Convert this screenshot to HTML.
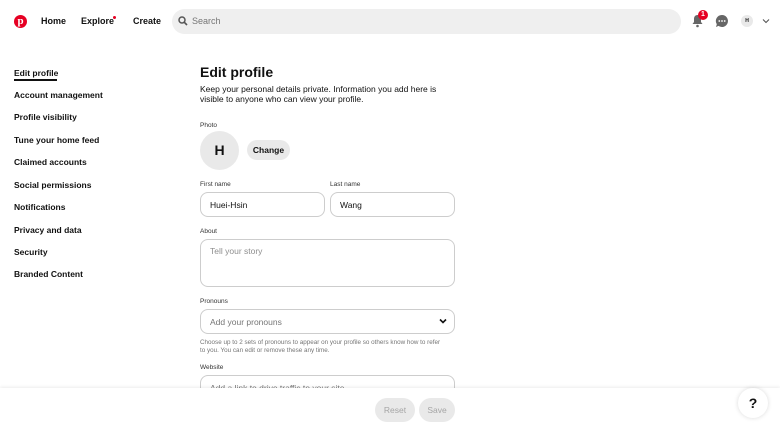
<!DOCTYPE html>
<html><head><meta charset="utf-8"><style>
*{box-sizing:border-box;margin:0;padding:0}
body{width:780px;height:428px;overflow:hidden;background:#fff;font-family:"Liberation Sans",Arial,sans-serif;color:#111;position:relative}
.a{position:absolute;white-space:nowrap}
.nav{font-size:8.5px;font-weight:bold;left:14px}
.top{font-size:9px;font-weight:bold;top:16px}
.lbl{font-size:6.5px;color:#333;left:200px}
.inp{position:absolute;border:1.5px solid #cdcdcd;border-radius:8px;font-size:8.5px;padding-left:9px;display:flex;align-items:center}
.btn{position:absolute;background:#e9e9e9;border-radius:12px;font-size:8.5px;font-weight:bold;display:flex;align-items:center;justify-content:center}
</style></head><body>
<div class="a" style="left:14px;top:15px;width:13px;height:13px;border-radius:50%;background:#e60023;color:#fff;font-size:11px;font-weight:bold;text-align:center;line-height:13px;font-family:'Liberation Serif',serif">p</div>
<div class="a top" style="left:41px">Home</div>
<div class="a top" style="left:81px">Explore</div>
<div class="a" style="left:113px;top:16px;width:3px;height:3px;border-radius:50%;background:#e60023"></div>
<div class="a top" style="left:133px">Create</div>
<div class="a" style="left:172px;top:9px;width:509px;height:25px;border-radius:13px;background:#efefef"></div>
<svg class="a" style="left:178px;top:16px" width="10" height="10" viewBox="0 0 10 10"><circle cx="4" cy="4" r="3" fill="none" stroke="#555" stroke-width="1.5"/><path d="M6.2 6.2L9 9" stroke="#555" stroke-width="1.6"/></svg>
<div class="a" style="left:192px;top:16px;font-size:9px;color:#767676">Search</div>
<svg class="a" style="left:691px;top:14px" width="13" height="14" viewBox="0 0 13 14"><path d="M6.5 1C4 1 3 3 3 5v3L1.5 10h10L10 8V5C10 3 9 1 6.5 1z" fill="#666"/><circle cx="6.5" cy="12" r="1.3" fill="#666"/></svg>
<div class="a" style="left:698px;top:10px;width:10px;height:10px;border-radius:50%;background:#e60023;color:#fff;font-size:7px;font-weight:bold;text-align:center;line-height:10px">1</div>
<svg class="a" style="left:715px;top:14px" width="14" height="14" viewBox="0 0 14 14"><path d="M7 1a6 6 0 1 1-3.5 10.9L1 13l.8-2.8A6 6 0 0 1 7 1z" fill="#666"/><circle cx="4.3" cy="7" r=".9" fill="#fff"/><circle cx="7" cy="7" r=".9" fill="#fff"/><circle cx="9.7" cy="7" r=".9" fill="#fff"/></svg>
<div class="a" style="left:741px;top:15px;width:12px;height:12px;border-radius:50%;background:#e9e9e9;font-size:5px;font-weight:bold;text-align:center;line-height:12px">H</div>
<svg class="a" style="left:762px;top:18px" width="8" height="6" viewBox="0 0 8 6"><path d="M1 1.5L4 4.5 7 1.5" fill="none" stroke="#555" stroke-width="1.1"/></svg>

<div class="a nav" style="top:68px">Edit profile</div>
<div class="a" style="left:14px;top:79px;width:43px;height:2px;background:#111"></div>
<div class="a nav" style="top:90px">Account management</div>
<div class="a nav" style="top:112px">Profile visibility</div>
<div class="a nav" style="top:135px">Tune your home feed</div>
<div class="a nav" style="top:157px">Claimed accounts</div>
<div class="a nav" style="top:180px">Social permissions</div>
<div class="a nav" style="top:202px">Notifications</div>
<div class="a nav" style="top:225px">Privacy and data</div>
<div class="a nav" style="top:247px">Security</div>
<div class="a nav" style="top:269px">Branded Content</div>

<div class="a" style="left:200px;top:64px;font-size:14px;font-weight:bold">Edit profile</div>
<div class="a" style="left:200px;top:85px;font-size:8.5px;line-height:9.5px">Keep your personal details private. Information you add here is<br>visible to anyone who can view your profile.</div>
<div class="a lbl" style="top:122px">Photo</div>
<div class="a" style="left:200px;top:131px;width:39px;height:39px;border-radius:50%;background:#e9e9e9;font-size:14px;font-weight:bold;text-align:center;line-height:39px">H</div>
<div class="btn" style="left:247px;top:140px;width:43px;height:20px;border-radius:10px">Change</div>
<div class="a lbl" style="top:181px">First name</div>
<div class="a lbl" style="left:330px;top:181px">Last name</div>
<div class="inp" style="left:200px;top:192px;width:125px;height:25px">Huei-Hsin</div>
<div class="inp" style="left:330px;top:192px;width:125px;height:25px">Wang</div>
<div class="a lbl" style="top:228px">About</div>
<div class="inp" style="left:200px;top:239px;width:255px;height:48px;align-items:flex-start;padding-top:6px;color:#8e8e8e">Tell your story</div>
<div class="a lbl" style="top:298px">Pronouns</div>
<div class="inp" style="left:200px;top:309px;width:255px;height:25px;color:#767676">Add your pronouns</div>
<svg class="a" style="left:439px;top:318px" width="8" height="6" viewBox="0 0 8 6"><path d="M1 1.5L4 4.5 7 1.5" fill="none" stroke="#111" stroke-width="1.6"/></svg>
<div class="a" style="left:200px;top:339px;font-size:6.3px;line-height:8px;color:#767676">Choose up to 2 sets of pronouns to appear on your profile so others know how to refer<br>to you. You can edit or remove these any time.</div>
<div class="a lbl" style="top:364px">Website</div>
<div class="inp" style="left:200px;top:375px;width:255px;height:25px;color:#767676">Add a link to drive traffic to your site</div>

<div class="a" style="left:0;top:388px;width:780px;height:40px;background:#fff;box-shadow:0 -1px 3px rgba(0,0,0,.08)"></div>
<div class="btn" style="left:375px;top:398px;width:40px;height:24px;color:#a5a5a5;font-weight:normal">Reset</div>
<div class="btn" style="left:419px;top:398px;width:36px;height:24px;color:#a5a5a5;font-weight:normal">Save</div>
<div class="a" style="left:738px;top:388px;width:30px;height:30px;border-radius:50%;background:#fff;box-shadow:0 0 5px rgba(0,0,0,.15);font-size:14px;font-weight:bold;text-align:center;line-height:30px">?</div>
</body></html>
